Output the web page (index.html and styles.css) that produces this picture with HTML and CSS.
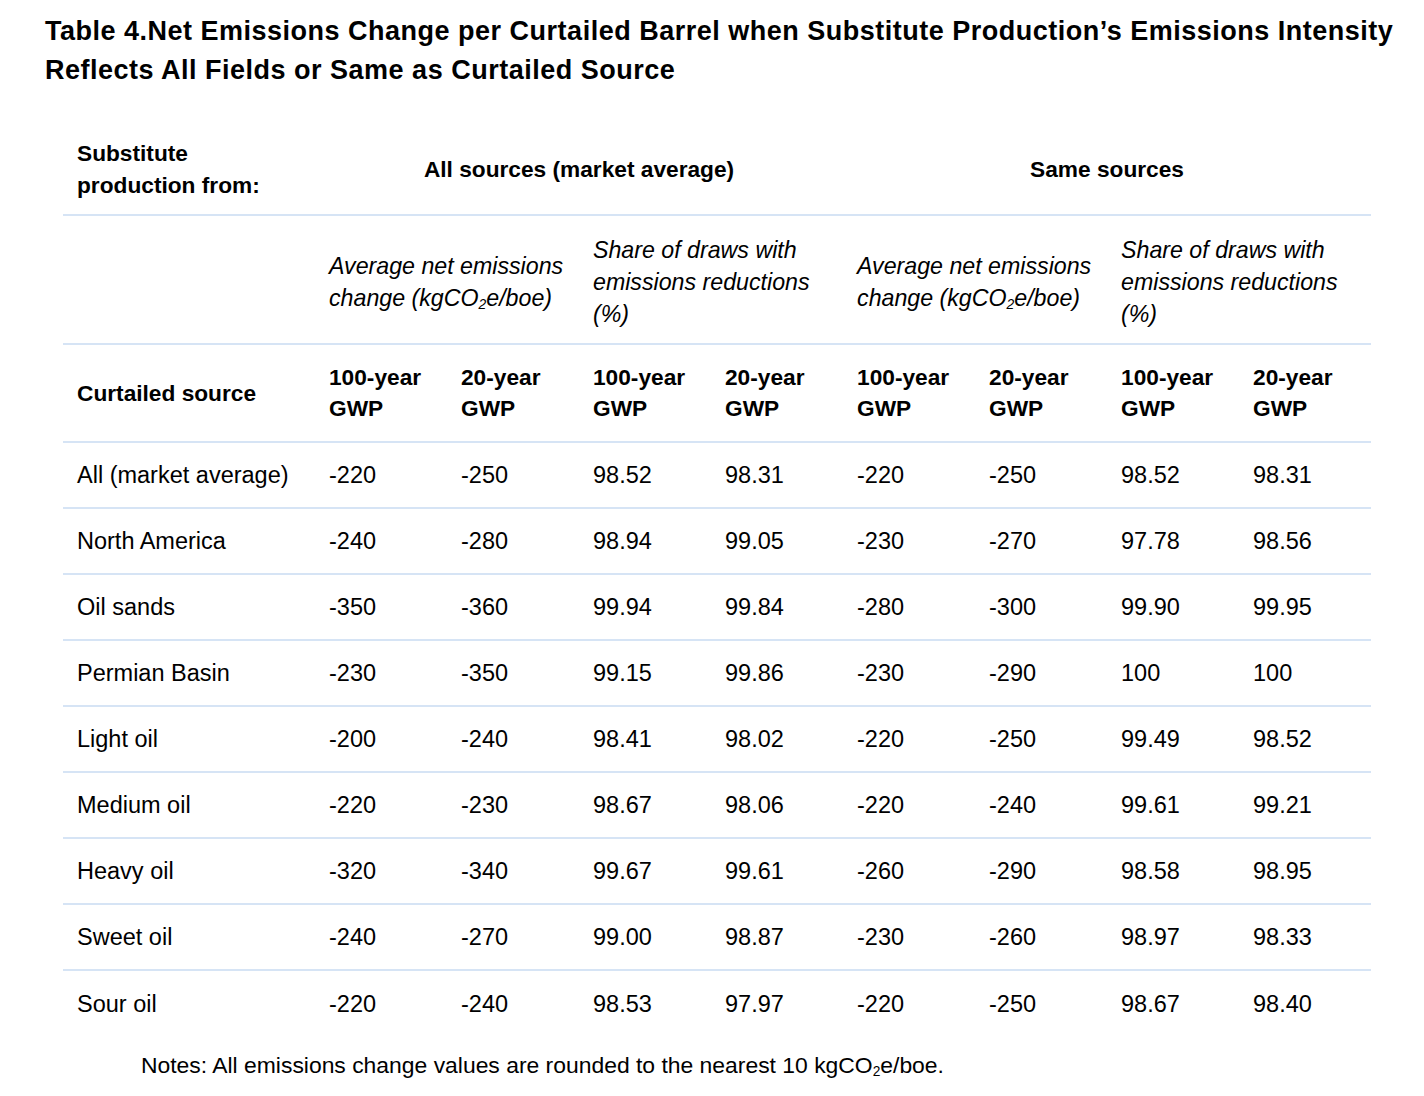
FILE: index.html
```html
<!DOCTYPE html>
<html lang="en">
<head>
<meta charset="utf-8">
<title>Table 4</title>
<link rel="stylesheet" href="styles.css">
</head>
<body>
<h1 class="title">Table 4.Net Emissions Change per Curtailed Barrel when Substitute Production’s Emissions Intensity Reflects All Fields or Same as Curtailed Source</h1>
<table class="data">
  <colgroup>
    <col class="c-first">
    <col class="c-num"><col class="c-num"><col class="c-num"><col class="c-num">
    <col class="c-num"><col class="c-num"><col class="c-num"><col class="c-num">
  </colgroup>
  <thead>
    <tr class="r-group">
      <th class="lead">Substitute<br>production from:</th>
      <th colspan="4" class="center">All sources (market average)</th>
      <th colspan="4" class="center">Same sources</th>
    </tr>
    <tr class="r-measure">
      <th></th>
      <th colspan="2" class="ital">Average net emissions<br>change (kgCO<sub>2</sub>e/boe)</th>
      <th colspan="2" class="ital">Share of draws with<br>emissions reductions<br>(%)</th>
      <th colspan="2" class="ital">Average net emissions<br>change (kgCO<sub>2</sub>e/boe)</th>
      <th colspan="2" class="ital">Share of draws with<br>emissions reductions<br>(%)</th>
    </tr>
    <tr class="r-gwp">
      <th class="lead">Curtailed source</th>
      <th>100-year<br>GWP</th><th>20-year<br>GWP</th>
      <th>100-year<br>GWP</th><th>20-year<br>GWP</th>
      <th>100-year<br>GWP</th><th>20-year<br>GWP</th>
      <th>100-year<br>GWP</th><th>20-year<br>GWP</th>
    </tr>
  </thead>
  <tbody>
    <tr><td>All (market average)</td><td>-220</td><td>-250</td><td>98.52</td><td>98.31</td><td>-220</td><td>-250</td><td>98.52</td><td>98.31</td></tr>
    <tr><td>North America</td><td>-240</td><td>-280</td><td>98.94</td><td>99.05</td><td>-230</td><td>-270</td><td>97.78</td><td>98.56</td></tr>
    <tr><td>Oil sands</td><td>-350</td><td>-360</td><td>99.94</td><td>99.84</td><td>-280</td><td>-300</td><td>99.90</td><td>99.95</td></tr>
    <tr><td>Permian Basin</td><td>-230</td><td>-350</td><td>99.15</td><td>99.86</td><td>-230</td><td>-290</td><td>100</td><td>100</td></tr>
    <tr><td>Light oil</td><td>-200</td><td>-240</td><td>98.41</td><td>98.02</td><td>-220</td><td>-250</td><td>99.49</td><td>98.52</td></tr>
    <tr><td>Medium oil</td><td>-220</td><td>-230</td><td>98.67</td><td>98.06</td><td>-220</td><td>-240</td><td>99.61</td><td>99.21</td></tr>
    <tr><td>Heavy oil</td><td>-320</td><td>-340</td><td>99.67</td><td>99.61</td><td>-260</td><td>-290</td><td>98.58</td><td>98.95</td></tr>
    <tr><td>Sweet oil</td><td>-240</td><td>-270</td><td>99.00</td><td>98.87</td><td>-230</td><td>-260</td><td>98.97</td><td>98.33</td></tr>
    <tr class="last"><td>Sour oil</td><td>-220</td><td>-240</td><td>98.53</td><td>97.97</td><td>-220</td><td>-250</td><td>98.67</td><td>98.40</td></tr>
  </tbody>
</table>
<p class="notes">Notes: All emissions change values are rounded to the nearest 10 kgCO<sub>2</sub>e/boe.</p>
</body>
</html>
```
FILE: styles.css
```css
html, body {
  margin: 0;
  padding: 0;
  background: #ffffff;
  color: #000000;
  font-family: "Liberation Sans", Arial, sans-serif;
}

body {
  width: 1424px;
  height: 1096px;
  overflow: hidden;
}

.title {
  margin: 0;
  padding: 12px 0 0 45px;
  max-width: 1370px;
  font-size: 27px;
  line-height: 39px;
  font-weight: 700;
  letter-spacing: 0.5px;
}

.data {
  margin: 33px 0 0 63px;
  width: 1308px;
  border-collapse: separate;
  border-spacing: 0;
  table-layout: fixed;
  font-size: 23.5px;
}

.c-first { width: 252px; }
.c-num { width: 132px; }

.data th,
.data td {
  box-sizing: border-box;
  padding: 0 2px 0 14px;
  text-align: left;
  vertical-align: middle;
  border-bottom: 2px solid #d6e4f5;
  white-space: nowrap;
}

.data th {
  font-size: 22.7px;
  font-weight: 700;
  line-height: 31px;
}

.data th.center { text-align: center; padding: 0; }

.data th.ital {
  font-size: 23.2px;
  font-style: italic;
  font-weight: 400;
  line-height: 32px;
  padding-top: 4px;
}

.r-group th { height: 93px; line-height: 32px; }
.r-measure th { height: 129px; }
.r-gwp th { height: 98px; }

.data td {
  height: 66px;
  line-height: 26px;
}

.data tr.last td { border-bottom: 0; height: 66px; }

sub {
  font-size: 0.6em;
  line-height: 0;
  vertical-align: -0.2em;
}

.notes {
  margin: 14px 0 0 141px;
  font-size: 22.9px;
  line-height: 28px;
}
```
